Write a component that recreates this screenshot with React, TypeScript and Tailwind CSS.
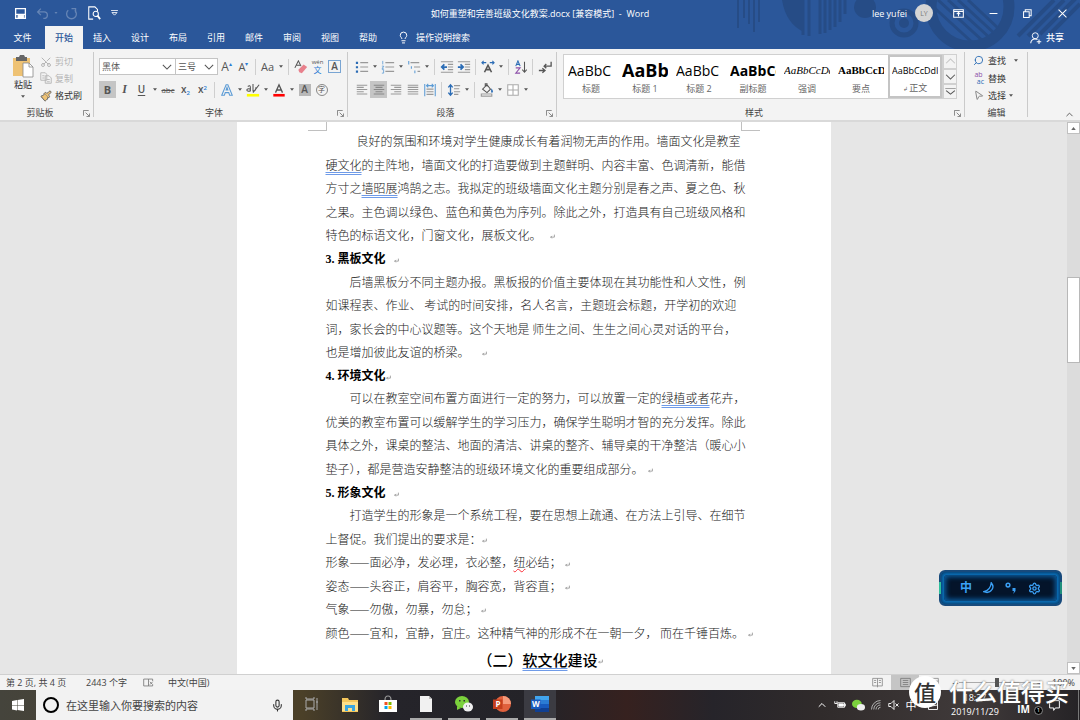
import React from 'react';
import clsx from 'clsx';
import { Lightbulb, Mic, Search, MousePointer2, Scissors, ChevronUp, Settings, Paintbrush } from 'lucide-react';

type IconProps = { children: React.ReactNode; className?: string };

const Icon: React.FC<IconProps> = ({ children, className = 'size-[14px]' }) => (
  <svg viewBox="0 0 16 16" className={clsx('shrink-0', className)} fill="none" stroke="currentColor" strokeWidth={1.2} aria-hidden="true">
    {children}
  </svg>
);

const Arrow: React.FC<{ label: string }> = ({ label }) => (
  <button aria-label={label} className="flex h-[17px] w-[9px] shrink-0 items-center justify-center text-[#555]">
    <svg viewBox="0 0 6 4" className="h-[3px] w-[4px]" fill="currentColor"><path d="M0 0h6L3 4z" /></svg>
  </button>
);

const Divider = () => <span className="mx-[3px] h-4 w-px shrink-0 bg-[#cfcfcf]" />;

type ToolProps = { label: string; active?: boolean; className?: string; children: React.ReactNode };

const Tool: React.FC<ToolProps> = ({ label, active, className = 'w-[17px]', children }) => (
  <button
    aria-label={label}
    className={clsx('flex h-[17px] shrink-0 items-center justify-center text-[#555]', className, active && 'bg-[#c5c5c5]')}
  >
    {children}
  </button>
);

const Launcher = () => (
  <button aria-label="更多选项" className="absolute right-1 bottom-[3px] text-[#777]">
    <svg viewBox="0 0 8 8" className="size-[7px]" fill="none" stroke="currentColor"><path d="M.5 6.500v-6h6M3 3l4 4M7.500 4v3.500H4" /></svg>
  </button>
);

type GroupProps = { title: string; className?: string; launcher?: boolean; children: React.ReactNode };

const Group: React.FC<GroupProps> = ({ title, className, launcher = true, children }) => (
  <section className={clsx('relative flex shrink-0 flex-col', className)}>
    <div className="flex-1">{children}</div>
    <h2 className="h-[15px] text-center leading-[15px] text-[#444]">{title}</h2>
    {launcher && <Launcher />}
    <span className="absolute right-0 top-[3px] bottom-[3px] w-px bg-[#cacaca]" />
  </section>
);

type ComboProps = { label: string; value: string; className: string };

const Combo: React.FC<ComboProps> = ({ label, value, className }) => (
  <div className={clsx('relative h-[17px] border border-[#c4c4c4] bg-white', className)}>
    <select aria-label={label} className="h-full w-full appearance-none bg-transparent pl-[2px] text-[9px] leading-[15px] text-[#555]">
      <option>{value}</option>
    </select>
    <svg viewBox="0 0 12 7" className="pointer-events-none absolute right-[3px] top-[5px] h-[6px] w-[10px]" fill="none" stroke="#555" strokeWidth={1.3}>
      <path d="M1 1l5 5 5-5" />
    </svg>
  </div>
);

const alignPaths = {
  left: 'M2 2.500h12M2 5h8M2 7.500h12M2 10h8M2 12.500h12',
  center: 'M2 2.500h12M4 5h8M2 7.500h12M4 10h8M2 12.500h12',
  right: 'M2 2.500h12M6 5h8M2 7.500h12M6 10h8M2 12.500h12',
  justify: 'M2 2.500h12M2 5h12M2 7.500h12M2 10h12M2 12.500h12',
};

const tabs = ['插入', '设计', '布局', '引用', '邮件', '审阅', '视图', '帮助'];

const styleItems = [
  { sample: 'AaBbC', name: '标题', className: 'text-[14px]' },
  { sample: 'AaBb', name: '标题 1', className: 'text-[18px] font-bold' },
  { sample: 'AaBbC', name: '标题 2', className: 'text-[14px]' },
  { sample: 'AaBbCc', name: '副标题', className: 'text-[14px] font-bold' },
  { sample: 'AaBbCcDd', name: '强调', className: "font-['Liberation_Serif',serif] text-[11px] italic" },
  { sample: 'AaBbCcD', name: '要点', className: "font-['Liberation_Serif',serif] text-[11px] font-bold" },
  { sample: 'AaBbCcDdI', name: '正文', className: 'text-[9px]', selected: true },
];

/* Title bar and tabs */

const HeaderArt = () => (
  <svg viewBox="0 0 380 49" className="pointer-events-none absolute right-0 top-0 h-full w-[380px]" fill="none" stroke="#264c86" aria-hidden="true">
    <path d="M38 0v28M44 0v18M49 0v24M54 0v32M59 0v22" strokeWidth={2} />
    <path d="M82 0q4 24 22 32V0z" fill="#264c86" stroke="none" />
    <path d="M103 0v35M109 0v36M120 0v34M125 0v33M130 0v30M135 0v27M140 0v22M145 0v14" strokeWidth={3} />
    <circle cx="165" cy="7" r="11" fill="#264c86" stroke="none" />
    <circle cx="204" cy="23" r="12" strokeWidth={5} />
    <circle cx="204" cy="23" r="5" fill="#264c86" stroke="none" />
    <circle cx="270" cy="7" r="39" strokeWidth={11} />
    <path d="M238 0l46 42M248 0l42 38M258 0l36 33M268 0l30 28M228 2l46 42" strokeWidth={3} />
    <path d="M318 36l36-36M328 36l36-36M340 34l38-38M350 34l30-30" strokeWidth={4} />
  </svg>
);

const Header = () => (
  <header className="relative bg-[#2b579a] text-white">
    <HeaderArt />
    <div className="relative grid h-[26px] grid-cols-[1fr_auto_1fr] items-center">
      <div className="flex items-center pl-[14px]">
        <button aria-label="保存" className="w-[13px]">
          <Icon className="size-[13px]"><path d="M2 2h12v12H2zM2 9h12" strokeWidth={1.6} /><path d="M5 10h7v4H5z" fill="currentColor" /></Icon>
        </button>
        <button aria-label="撤消" className="ml-[9px] flex w-[22px] items-center gap-[5px] text-[#6685b5]">
          <Icon className="size-[13px]"><path d="M6 2L2 6l4 4M2 6h8q4 0 4 4t-5 4" strokeWidth={1.6} /></Icon>
          <svg viewBox="0 0 6 4" className="h-[2px] w-[4px]" fill="currentColor"><path d="M0 0h6L3 4z" /></svg>
        </button>
        <button aria-label="重复" className="ml-[7px] text-[#6685b5]">
          <Icon className="size-[13px]"><path d="M4 4a6 6 0 1 0 8 0M8 2h5v5" strokeWidth={1.6} /></Icon>
        </button>
        <button aria-label="打印预览" className="ml-[9px]">
          <Icon className="size-[14px]"><path d="M12 6V4L9 1H2v14h5" /><circle cx="10" cy="9" r="3" /><path d="M12 11l3 4" strokeWidth={2} /></Icon>
        </button>
        <button aria-label="自定义快速访问工具栏" className="ml-[10px]">
          <svg viewBox="0 0 8 7" className="h-[6px] w-[7px]" fill="none" stroke="currentColor"><path d="M0 .5h8M1 3h6L4 6z" /></svg>
        </button>
      </div>
      <h1 className="whitespace-pre text-[9px]">如何重塑和完善班级文化教案.docx [兼容模式]  -  Word</h1>
      <div className="flex items-center justify-end">
        <span className="text-[9px]">lee yufei</span>
        <span className="ml-2 flex size-[18px] items-center justify-center rounded-full bg-[#d5d5d5] text-[7px] text-[#777]">LY</span>
        <button aria-label="功能区显示选项" className="ml-2 flex w-[35px] justify-center">
          <Icon className="size-[11px]"><path d="M1 2.500h14v11H1zM1 5h14M8 12V7M5.500 9L8 6.500 10.500 9" strokeWidth={1.5} /></Icon>
        </button>
        <button aria-label="最小化" className="flex w-[34px] justify-center"><Icon className="size-[9px]"><path d="M1 8h14" strokeWidth={1.8} /></Icon></button>
        <button aria-label="还原" className="flex w-[35px] justify-center">
          <Icon className="size-[9px]"><path d="M1 5h10v10H1zM4 5V1.500h10.500V12H11" strokeWidth={1.8} /></Icon>
        </button>
        <button aria-label="关闭" className="flex w-[35px] justify-center"><Icon className="size-[9px]"><path d="M1 1l14 14M15 1L1 15" strokeWidth={1.8} /></Icon></button>
      </div>
    </div>
    <nav className="relative flex h-[23px] items-center">
      <button className="w-[45px]">文件</button>
      <button className="h-full w-[38px] bg-[#f3f3f3] font-medium text-[#2b579a]">开始</button>
      {tabs.map((tab) => (
        <button key={tab} className="w-[38px]">{tab}</button>
      ))}
      <button className="ml-2 flex items-center gap-1 pl-[2px]"><Lightbulb className="mr-[2px] size-[13px]" strokeWidth={1.8} />操作说明搜索</button>
      <button className="ml-auto mr-4 flex items-center gap-1 font-medium">
        <Icon className="size-[12px]"><circle cx="7" cy="5" r="4" /><path d="M1 15q0-5 6-6l3 1M12 10v6M9 13h6" strokeWidth={1.4} /></Icon>
        共享
      </button>
    </nav>
  </header>
);

/* Ribbon */

const Clipboard = () => (
  <Group title="剪贴板" className="w-[94px] [&>h2]:pr-[14px]">
    <div className="flex pl-3 pt-[5px]">
      <button className="flex w-[22px] flex-col items-center text-[#333]">
        <svg viewBox="0 0 22 24" className="h-6 w-[22px]" aria-hidden="true">
          <path d="M1 4h17v18H1z" fill="#eec274" />
          <path d="M4 3h3l1-2h4l1 2h2v4H4z" fill="#666" />
          <path d="M11 9h6l4 4v10H11z" fill="#fff" stroke="#888" strokeWidth=".8" />
          <path d="M17 9v4h4" fill="none" stroke="#888" strokeWidth=".8" />
        </svg>
        <span className="leading-[13px]">粘贴</span>
        <svg viewBox="0 0 6 4" className="mt-1 h-[3px] w-[4px]" fill="#555"><path d="M0 0h6L3 4z" /></svg>
      </button>
      <div className="ml-[6px] flex flex-col text-[#b5b5b5]">
        <button className="flex h-[15px] items-center gap-[3px]"><Scissors className="size-[12px] -rotate-90" />剪切</button>
        <button className="flex h-[18px] items-center gap-[3px]">
          <Icon className="size-[12px]"><path d="M1 1h6l2 2v8H1zM7 5h5l3 3v7H7zM3 5h3M3 8h3M9 10h4M9 13h4" /></Icon>复制
        </button>
        <button className="flex h-[17px] items-center gap-[3px] text-[#333]"><Paintbrush className="size-[12px] fill-[#eec274] text-[#666]" />格式刷</button>
      </div>
    </div>
  </Group>
);

const FontGroup = () => (
  <Group title="字体" className="w-[254px] [&>h2]:pr-[14px]">
    <div className="flex items-center pl-[5px] pt-[9px]">
      <Combo label="字体" value="黑体" className="w-[77px]" />
      <Combo label="字号" value="三号" className="-ml-px w-[43px]" />
      <Tool label="增大字号"><span className="text-[12px] leading-none font-medium">A</span><span className="-mt-[6px] text-[6px] leading-none text-[#2b7cd3]">▴</span></Tool>
      <Tool label="减小字号"><span className="text-[11px] leading-none font-medium">A</span><span className="-mt-[6px] text-[6px] leading-none text-[#2b7cd3]">▾</span></Tool>
      <Divider />
      <Tool label="更改大小写"><span className="text-[11px]">Aa</span></Tool>
      <Arrow label="大小写选项" />
      <Divider />
      <Tool label="清除格式">
        <Icon><path d="M1 9L5 1l3 6M3 6h4" /><path d="M5 11l6-6 4 3-6 7-3-1z" fill="#e8808c" stroke="none" /></Icon>
      </Tool>
      <Tool label="拼音指南">
        <span className="flex flex-col items-center"><span className="text-[6px] leading-[6px]">wén</span><span className="text-[8px] leading-[9px] text-[#2b7cd3]">文</span></span>
      </Tool>
      <Tool label="字符边框"><span className="flex size-[13px] items-center justify-center border border-[#79a5d3] text-[10px] font-semibold">A</span></Tool>
    </div>
    <div className="flex items-center pl-[5px] pt-[6px]">
      <Tool label="加粗" active><span className="text-[11px] font-bold">B</span></Tool>
      <Tool label="倾斜"><span className="font-['Liberation_Serif',serif] text-[12px] font-bold italic">I</span></Tool>
      <Tool label="下划线"><span className="text-[10px] font-semibold underline underline-offset-2">U</span></Tool>
      <Arrow label="下划线样式" />
      <Tool label="删除线" className="w-[18px]"><span className="text-[8px] line-through">abc</span></Tool>
      <Tool label="下标"><span className="text-[10px] font-semibold">x<sub className="text-[6px] text-[#2b7cd3]">2</sub></span></Tool>
      <Tool label="上标"><span className="text-[10px] font-semibold">x<sup className="text-[6px] text-[#2b7cd3]">2</sup></span></Tool>
      <Divider />
      <Tool label="文本效果"><Icon><path d="M2 14L7 2h2l5 12h-3l-1-3H6l-1 3zM7 8l1-3 1 3z" stroke="#5b9bd5" /></Icon></Tool>
      <Arrow label="文本效果选项" />
      <Tool label="突出显示">
        <Icon><path d="M1 12.500h14v3H1z" fill="#ff0" stroke="none" /><path d="M2 4q3-2 3 1v4q-4 1-4-1t4-1M8 1v8q4 0 3-4M15 2L8 11" /></Icon>
      </Tool>
      <Arrow label="突出显示颜色" />
      <Tool label="字体颜色">
        <Icon><path d="M1.500 12.500h13v3h-13z" fill="#f00" stroke="none" /><path d="M4 11l4-9 4 9M5 8h6" strokeWidth={1.5} /></Icon>
      </Tool>
      <Arrow label="字体颜色选项" />
      <Tool label="字符底纹"><span className="flex size-3 items-center justify-center bg-[#b8b8b8] text-[10px] font-semibold">A</span></Tool>
      <Tool label="带圈字符"><span className="flex size-3 items-center justify-center rounded-full border border-[#888] text-[7px] leading-none">字</span></Tool>
    </div>
  </Group>
);

const ParagraphGroup = () => (
  <Group title="段落" className="w-[209px] [&>h2]:pr-[14px]">
    <div className="flex items-center pl-[5px] pt-[9px]">
      <Tool label="项目符号">
        <Icon><path d="M6 3h9M6 8h9M6 13h9" stroke="#999" /><path d="M1 2h2.500v2.500H1zM1 7h2.500v2.500H1zM1 12h2.500v2.500H1z" fill="#2b6cb5" stroke="none" /></Icon>
      </Tool>
      <Arrow label="项目符号库" />
      <Tool label="编号"><Icon><path d="M5 3h10M5 8h10M5 13h10" stroke="#999" /><path d="M2 1v4M1 7h2v1L1 9.500h2M1 11h2v4H1" stroke="#5b9bd5" strokeWidth={0.9} /></Icon></Tool>
      <Arrow label="编号库" />
      <Tool label="多级列表"><Icon><path d="M4 3h10M8 8h7M12 13h3" stroke="#999" /><path d="M2 1v4M5 7v3M9 12v3" stroke="#5b9bd5" /></Icon></Tool>
      <Arrow label="列表库" />
      <Divider />
      <Tool label="减少缩进量"><Icon><path d="M1 2h14M9 5h6M9 8h6M9 11h6M1 14h14" stroke="#999" /><path d="M8 8H2M5 5L2 8l3 3" stroke="#2b6cb5" strokeWidth={2} /></Icon></Tool>
      <Tool label="增加缩进量"><Icon><path d="M1 2h14M9 5h6M9 8h6M9 11h6M1 14h14" stroke="#999" /><path d="M1 8h6M4 5l3 3-3 3" stroke="#2b6cb5" strokeWidth={2} /></Icon></Tool>
      <Divider />
      <Tool label="中文版式"><Icon><path d="M4 14l4-8 4 8M5 11h6" strokeWidth={1.8} /><path d="M1 3h5M3 1L1 3l2 2M10 3h5M13 1l2 2-2 2" stroke="#2b6cb5" /></Icon></Tool>
      <Arrow label="中文版式选项" />
      <Divider />
      <Tool label="排序">
        <Icon><path d="M2 7l2.500-6L7 7M3 5h3" stroke="#2b6cb5" /><path d="M2 9h5l-5 6h5" stroke="#8c4fa8" /><path d="M12 2v12M9.500 11l2.500 3 2.500-3" /></Icon>
      </Tool>
      <Divider />
      <Tool label="显示编辑标记"><Icon><path d="M15 2v5H7M9.500 4.500L7 7l2.500 2.500M1 12h7M5 9.500L8 12l-3 2.500" strokeWidth={1.5} /></Icon></Tool>
    </div>
    <div className="flex items-center pl-[5px] pt-[6px]">
      <Tool label="左对齐"><Icon><path d={alignPaths.left} stroke="#999" /></Icon></Tool>
      <Tool label="居中" active><Icon><path d={alignPaths.center} stroke="#888" /></Icon></Tool>
      <Tool label="右对齐"><Icon><path d={alignPaths.right} stroke="#999" /></Icon></Tool>
      <Tool label="两端对齐"><Icon><path d={alignPaths.justify} stroke="#999" /></Icon></Tool>
      <Tool label="分散对齐"><Icon><path d="M4 7h8M4 10h8M4 13h8" stroke="#999" /><path d="M2 1v14M14 1v14M4 3h8M6 1L4 3l2 2M10 1l2 2-2 2" stroke="#5b9bd5" /></Icon></Tool>
      <Divider />
      <Tool label="行距"><Icon><path d="M8 3h7M8 6.500h6M8 10h7M8 13h5" stroke="#999" /><path d="M4 2v12M1.500 5L4 2l2.500 3M1.500 11L4 14l2.500-3" stroke="#2b6cb5" strokeWidth={1.5} /></Icon></Tool>
      <Arrow label="行距选项" />
      <Divider />
      <Tool label="底纹"><Icon><path d="M1.500 12.500h12v2.500h-12z" fill="#fff" stroke="#999" /><path d="M3 7l5-5 4 5-4 4zM6 4V1h2v3" /><path d="M13 6q3 4 1 5t-1-5" fill="#2b6cb5" stroke="none" /></Icon></Tool>
      <Arrow label="底纹颜色" />
      <Tool label="边框"><Icon><path d="M2 2h12v12H2zM8 2v12M2 8h12" fill="#fff" stroke="#aaa" /></Icon></Tool>
      <Arrow label="边框选项" />
    </div>
  </Group>
);

const GalleryButton: React.FC<{ label: string; d: string; muted?: boolean }> = ({ label, d, muted }) => (
  <button aria-label={label} className={clsx('flex flex-1 items-center justify-center border border-[#d0d0d0]', muted ? 'text-[#c4c4c4]' : 'text-[#555]')}>
    <svg viewBox="0 0 12 8" className="h-[7px] w-[11px]" fill="none" stroke="currentColor" strokeWidth={1.2}><path d={d} /></svg>
  </button>
);

const StylesGroup = () => (
  <Group title="样式" className="w-[408px] [&>h2]:pr-[14px]">
    <div className="mt-[5px] flex h-[45px] pl-[6px]">
      <div className="flex border border-[#d0d0d0] bg-white">
        {styleItems.map((item) => (
          <button
            key={item.name}
            className={clsx('flex w-[54px] flex-col items-center border-2 px-[2px] py-[1px]', item.selected ? 'border-[#c4c4c4]' : 'border-transparent')}
          >
            <span className={clsx('flex h-[26px] w-full items-center overflow-hidden whitespace-nowrap text-black', item.className)}>{item.sample}</span>
            <span className="leading-[12px] text-[#666]">{item.selected && <small className="text-[6px]">↲ </small>}{item.name}</span>
          </button>
        ))}
      </div>
      <div className="flex w-[14px] flex-col">
        <GalleryButton label="上一行" d="M1 6l5-5 5 5" muted />
        <GalleryButton label="下一行" d="M1 2l5 5 5-5" />
        <GalleryButton label="其他样式" d="M0 0h12M1 3l5 4 5-4" />
      </div>
    </div>
  </Group>
);

const EditingGroup = () => (
  <Group title="编辑" launcher={false} className="w-[63px]">
    <div className="flex flex-col pl-2 pt-[3px] text-[#333]">
      <div className="flex h-[17px] items-center">
        <button className="flex items-center gap-1"><Search className="size-[11px] -scale-x-100 text-[#2b6cb5]" />查找</button>
        <span className="ml-[5px] flex"><Arrow label="查找选项" /></span>
      </div>
      <button className="flex h-[18px] items-center gap-1">
        <span className="flex w-[11px] flex-col text-[7px] leading-[7px]"><span className="text-[#8c4fa8]">ab</span><span className="text-right text-[#2b6cb5]">ac</span></span>替换
      </button>
      <div className="flex h-[17px] items-center">
        <button className="flex items-center gap-1">
          <MousePointer2 className="size-[11px] rotate-12 text-[#888]" />选择
        </button>
        <Arrow label="选择选项" />
      </div>
    </div>
  </Group>
);

const Ribbon = () => (
  <div className="flex h-[73px] border-b-2 border-[#d9d9d9] bg-[#f3f3f3]">
    <Clipboard />
    <FontGroup />
    <ParagraphGroup />
    <StylesGroup />
    <EditingGroup />
    <button aria-label="折叠功能区" className="ml-auto mr-[5px] self-end text-[#555]"><ChevronUp className="size-[11px]" /></button>
  </div>
);

/* Document */

const Mark: React.FC<{ className?: string }> = ({ className = 'ml-1' }) => (
  <svg viewBox="0 0 8 8" className={clsx('inline size-[5px]', className)} fill="none" stroke="#888" strokeWidth={1.2} aria-hidden="true">
    <path d="M7 1v4H1M3 3L1 5l2 2" />
  </svg>
);

const Line: React.FC<{ className?: string; children: React.ReactNode }> = ({ className, children }) => (
  <p className={clsx('flex flex-1 items-center pb-[3px] leading-5 whitespace-nowrap', className)}><span>{children}</span></p>
);

const Title: React.FC<{ children: React.ReactNode }> = ({ children }) => (
  <h3 className="flex flex-1 items-center whitespace-nowrap font-['Liberation_Serif','Noto_Sans_CJK_SC',serif] font-bold text-black"><span>{children}</span></h3>
);

const Grammar: React.FC<{ children: React.ReactNode }> = ({ children }) => (
  <span className="underline decoration-[#6f9be8] decoration-double decoration-1 underline-offset-2">{children}</span>
);

const Page = () => (
  <article className="flex w-[594px] flex-col bg-white">
    <div className="flex justify-between px-[71px]" aria-hidden="true">
      <span className="h-[9px] w-[19px] border-r border-b border-[#c0c0c0]" />
      <span className="h-[9px] w-[19px] border-l border-b border-[#c0c0c0]" />
    </div>
    <div className="flex flex-1 flex-col pl-[89px] font-['Noto_Sans_CJK_SC',sans-serif] text-[12px] leading-[23px] font-light text-[#222]">
      <Line className="pl-[31px]">良好的氛围和环境对学生健康成长有着润物无声的作用。墙面文化是教室</Line>
      <Line><Grammar>硬文化</Grammar>的主阵地，墙面文化的打造要做到主题鲜明、内容丰富、色调清新，能借</Line>
      <Line>方寸之<Grammar>墙昭展</Grammar>鸿鹄之志。我拟定的班级墙面文化主题分别是春之声、夏之色、秋</Line>
      <Line>之果。主色调以绿色、蓝色和黄色为序列。除此之外，打造具有自己班级风格和</Line>
      <Line>特色的标语文化，门窗文化，展板文化。<Mark className="ml-2" /></Line>
      <Title>3. 黑板文化<Mark className="ml-2" /></Title>
      <Line className="pl-6">后墙黑板分不同主题办报。黑板报的价值主要体现在其功能性和人文性，例</Line>
      <Line>如课程表、作业、 考试的时间安排，名人名言，主题班会标题，开学初的欢迎</Line>
      <Line>词，家长会的中心议题等。这个天地是 师生之间、生生之间心灵对话的平台，</Line>
      <Line>也是增加彼此友谊的桥梁。<Mark className="ml-3" /></Line>
      <Title>4. 环境文化<Mark className="" /></Title>
      <Line className="pl-6">可以在教室空间布置方面进行一定的努力，可以放置一定的<Grammar>绿植或者</Grammar>花卉，</Line>
      <Line>优美的教室布置可以缓解学生的学习压力，确保学生聪明才智的充分发挥。除此</Line>
      <Line>具体之外，课桌的整洁、地面的清洁、讲桌的整齐、辅导桌的干净整洁（暖心小</Line>
      <Line>垫子），都是营造安静整洁的班级环境文化的重要组成部分。<Mark /></Line>
      <Title>5. 形象文化<Mark className="ml-2" /></Title>
      <Line className="pl-6">打造学生的形象是一个系统工程，要在思想上疏通、在方法上引导、在细节</Line>
      <Line>上督促。我们提出的要求是：<Mark className="" /></Line>
      <Line>形象——面必净，发必理，衣必整，<span className="underline decoration-red-500 decoration-wavy decoration-1">纽</span>必结；<Mark /></Line>
      <Line>姿态——头容正，肩容平，胸容宽，背容直；<Mark /></Line>
      <Line>气象——勿傲，勿暴，勿怠；<Mark /></Line>
      <Line>颜色——宜和，宜静，宜庄。这种精气神的形成不在一朝一夕， 而在千锤百炼。<Mark /></Line>
      <h2 className="h-7 pr-[76px] text-center text-[15px] leading-[28px] font-medium text-black">（二）<Grammar>软文化</Grammar>建设<Mark className="" /></h2>
    </div>
  </article>
);

const Scrollbar = () => (
  <div className="flex w-[13px] shrink-0 flex-col bg-[#dcdcdc]">
    <button aria-label="向上滚动" className="flex h-3 items-center justify-center border border-[#c0c0c0] bg-white text-[#666]"><svg viewBox="0 0 6 4" className="h-[3px] w-[5px]" fill="currentColor"><path d="M0 4h6L3 0z" /></svg></button>
    <div className="flex flex-1 flex-col">
      <div className="grow-[143]" />
      <div className="grow-[84] border border-[#b8b8b8] bg-white" />
      <div className="grow-[299]" />
    </div>
    <button aria-label="向下滚动" className="flex h-3 items-center justify-center border border-[#c0c0c0] bg-white text-[#666]"><svg viewBox="0 0 6 4" className="h-[3px] w-[5px]" fill="currentColor"><path d="M0 0h6L3 4z" /></svg></button>
  </div>
);

const ImeBar = () => (
  <div className="absolute right-[18px] bottom-[114px] flex h-9 w-[123px] items-center rounded-md border-2 border-[#174a7c] bg-[#0b72bd] p-[3px] shadow-[inset_0_0_4px_#04203e]">
    <span className="absolute -left-[2px] h-3 w-[2px] bg-[#2fbf9b]" />
    <span className="absolute -right-[2px] h-3 w-[2px] bg-[#1f8f7c]" />
    <div className="flex h-full flex-1 items-center justify-between rounded bg-[#04142a] px-4 text-[#3ba0f5] shadow-[inset_0_0_5px_2px_#0b5c9e]">
      <button className="text-[12px] leading-none font-bold">中</button>
      <button aria-label="半角"><Icon className="size-3"><path d="M11 1q4 5 1 9-4 6-11 3 9-2 10-12z" strokeWidth={1.8} /></Icon></button>
      <button aria-label="中文标点"><Icon className="size-3"><circle cx="4" cy="4" r="2.500" strokeWidth={2} /><path d="M10 8h4v4l-3 4 1-4h-2z" fill="currentColor" stroke="none" /></Icon></button>
      <button aria-label="设置"><Settings className="size-[13px]" strokeWidth={2.5} /></button>
    </div>
  </div>
);

/* Bottom bars */

const StatusBar = () => (
  <footer className="flex h-4 items-center border-t border-[#d0d0d0] bg-[#f3f3f3] pl-[6px] text-[#444]">
    <span className="w-[80px]">第 2 页, 共 4 页</span>
    <span className="w-[57px]">2443 个字</span>
    <button aria-label="校对" className="w-[25px] text-[#777]"><Icon className="size-[11px]"><path d="M1 3h7v10H1zM8 3h6v3M8 13h6v-2M10 7l4 4M14 7l-4 4" /></Icon></button>
    <span>中文(中国)</span>
    <div className="ml-auto flex h-full items-center pr-[5px]">
      <button aria-label="阅读视图" className="flex w-[28px] justify-center text-[#888]"><Icon className="size-[11px]"><path d="M1 2h14v11H1zM8 2v13M3 5h3M3 8h3M10 5h3M10 8h3" /></Icon></button>
      <button aria-label="页面视图" className="flex h-full w-[28px] items-center justify-center bg-[#c5c5c5] text-[#777]"><Icon className="size-[11px]"><path d="M1 2h14v12H1zM4 5h8M4 8h8M4 11h8" /></Icon></button>
      <button aria-label="Web 版式视图" className="flex w-[28px] justify-center text-[#888]"><Icon className="size-[11px]"><path d="M1 2h14v12H1zM1 6h14" /></Icon></button>
      <button aria-label="缩小" className="ml-1 w-[8px] text-[11px] leading-none">−</button>
      <input
        type="range"
        aria-label="缩放比例"
        defaultValue={50}
        className="h-[9px] w-[76px] appearance-none bg-[linear-gradient(#aaa,#aaa)] bg-[length:100%_1px] bg-center bg-no-repeat [&::-webkit-slider-thumb]:h-[9px] [&::-webkit-slider-thumb]:w-1 [&::-webkit-slider-thumb]:appearance-none [&::-webkit-slider-thumb]:bg-[#555]"
      />
      <button aria-label="放大" className="w-[9px] text-[11px] leading-none">+</button>
      <span className="ml-2">100%</span>
    </div>
  </footer>
);

type TaskProps = { label: string; open?: boolean; active?: boolean; children: React.ReactNode };

const Task: React.FC<TaskProps> = ({ label, open, active, children }) => (
  <button
    aria-label={label}
    className={clsx('mx-[3px] flex h-full w-8 items-center justify-center border-b-2', open ? 'border-[#aaa]' : 'border-transparent', active && 'bg-[#3b3b42]')}
  >
    <svg viewBox="0 0 18 18" className="size-[18px]" aria-hidden="true">{children}</svg>
  </button>
);

const Taskbar = () => (
  <div className="flex h-[30px] items-center bg-[linear-gradient(90deg,#45443c_0%,#4b4028_28%,#25242a_36%,#242328_50%,#36211f_58%,#26242a_66%,#302b2b_76%,#403a3a_90%,#252326_100%)] text-white">
    <button aria-label="开始" className="flex w-9 justify-center">
      <svg viewBox="0 0 12 12" className="size-3" fill="#fff"><path d="M0 2l5-1v5H0zM5.500 1L12 0v6H5.500zM0 6.500h5v5l-5-1zM5.500 6.500H12V12l-6.500-1z" /></svg>
    </button>
    <label className="flex h-full w-[257px] items-center bg-[#f2f2f2] pl-[7px] pr-[9px]">
      <span className="size-4 shrink-0 rounded-full border-2 border-black" />
      <input aria-label="搜索" placeholder="在这里输入你要搜索的内容" className="ml-[7px] min-w-0 flex-1 bg-transparent text-[11px] text-black placeholder:text-[#444]" />
      <Mic className="size-[13px] shrink-0 text-[#333]" />
    </label>
    <Task label="任务视图"><path d="M3 5h8v8H3zM3 2v2h8V2M3 16v-2h8v2M14 3v12M13 7h2" fill="none" stroke="#aaa" /></Task>
    <Task label="文件资源管理器"><path d="M1 3h6l1 2h9v12H1z" fill="#f5c75c" /><path d="M1 7h16v9H1z" fill="#ffe08a" /><path d="M4 16v-6h10v6h-3v-3H7v3z" fill="#3ba6e0" /></Task>
    <Task label="应用商店"><path d="M6 5q0-4 3-4t3 4" fill="none" stroke="#999" strokeWidth="1.2" /><path d="M0 5h18v12H0z" fill="#fff" /><path d="M5.500 7h3v3h-3z" fill="#f25022" /><path d="M9.500 7h3v3h-3z" fill="#7fba00" /><path d="M5.500 11h3v3h-3z" fill="#00a4ef" /><path d="M9.500 11h3v3h-3z" fill="#ffb900" /></Task>
    <Task label="文档" open><path d="M3 1h9l3 3v13H3z" fill="#f1f1f1" /><path d="M12 1v3h3" fill="#bbb" /></Task>
    <Task label="微信" open><ellipse cx="7" cy="7" rx="7" ry="6" fill="#7bd13c" /><path d="M2 11v4l4-2z" fill="#7bd13c" /><ellipse cx="13" cy="12" rx="5" ry="4.500" fill="#f0f0f0" /><path d="M4 5h1.500v1.500H4zM8.500 5H10v1.500H8.500zM11 10.500h1v1h-1zM14 10.500h1v1h-1z" fill="#333" /></Task>
    <Task label="PowerPoint" open><circle cx="10" cy="9" r="8" fill="#e0603c" /><path d="M10 1a8 8 0 0 1 8 8h-8z" fill="#f59a7b" /><path d="M0 4.500h9.500v9.500H0z" fill="#c43e1c" /><text x="2.500" y="12" fontSize="8" fontWeight="700" fill="#fff">P</text></Task>
    <Task label="Word" open active><path d="M4 1h14v5H4z" fill="#41a5ee" /><path d="M4 5h14v4H4z" fill="#2b7cd3" /><path d="M4 9h14v4H4z" fill="#185abd" /><path d="M4 13h14v4H4z" fill="#103f91" /><path d="M0 4.500h9.500v9.500H0z" fill="#185abd" /><text x="1" y="12" fontSize="8" fontWeight="700" fill="#fff">W</text></Task>
    <div className="ml-auto flex h-full items-center">
      <button aria-label="显示隐藏的图标" className="w-[18px]"><ChevronUp className="mx-auto size-3" /></button>
      <span className="flex w-[18px] justify-center"><Icon className="size-3"><path d="M5 5h9v6H5zM14 7h2v2h-2M1 3v3h3V3" /><path d="M6.500 6.500h6v3h-6z" fill="currentColor" /></Icon></span>
      <span className="flex w-[18px] justify-center"><Icon className="size-[13px]"><ellipse cx="6" cy="6" rx="6" ry="5" fill="#7bd13c" stroke="none" /><ellipse cx="11" cy="10" rx="5" ry="4" fill="#eee" stroke="none" /></Icon></span>
      <span className="flex w-[18px] justify-center text-[#bbb]"><Icon className="size-3"><path d="M2 14A12 12 0 0 1 14 2M5 14a9 9 0 0 1 9-9M8 14a6 6 0 0 1 6-6M11 14a3 3 0 0 1 3-3" /></Icon></span>
      <span className="flex w-[18px] justify-center"><Icon className="size-3"><path d="M1 6h3l4-4v12l-4-4H1zM10 6l4 4M14 6l-4 4" /></Icon></span>
      <span className="w-[16px] text-center text-[11px]">中</span>
      <span className="flex w-[27px] justify-center"><Icon className="size-3"><path d="M2 2h12v12H2zM2 10l12-2" /></Icon></span>
      <time className="flex w-[58px] flex-col items-center text-[9px] leading-[14px]"><span>18:37</span><span>2019/11/29</span></time>
      <span className="relative flex h-full w-[43px] items-end justify-center pr-1 pb-[4px] text-[10px] font-bold">IM<span className="absolute right-[4px] bottom-[5px] flex size-[9px] items-center justify-center rounded-full border border-[#888] bg-black text-[6px] font-normal">1</span></span>
      <button aria-label="通知" className="mr-[17px] ml-[1px]"><Icon className="size-[13px]"><path d="M2 2h12v9H9l-2 3v-3H2z" /></Icon></button>
      <span className="h-full w-[2px] border-l border-[#777]" />
    </div>
  </div>
);

const Watermark = () => (
  <div className="pointer-events-none absolute right-[11px] bottom-[12px] flex items-center gap-[8px] whitespace-nowrap">
    <span className="flex size-8 items-center justify-center rounded-full bg-white text-[22px] leading-none font-medium text-[#333]">值</span>
    <span className="text-[24px] leading-[32px] font-medium text-white [text-shadow:0_0_2px_#555]">什么值得买</span>
  </div>
);

export default function App() {
  return (
    <div className="relative flex min-h-screen flex-col overflow-hidden bg-[#e6e6e6] font-['Open_Sans','Noto_Sans_CJK_SC',sans-serif] text-[9px] leading-[13px]">
      <Header />
      <Ribbon />
      <main className="flex flex-1">
        <div className="flex flex-1 justify-center"><Page /></div>
        <Scrollbar />
      </main>
      <StatusBar />
      <Taskbar />
      <ImeBar />
      <Watermark />
    </div>
  );
}
